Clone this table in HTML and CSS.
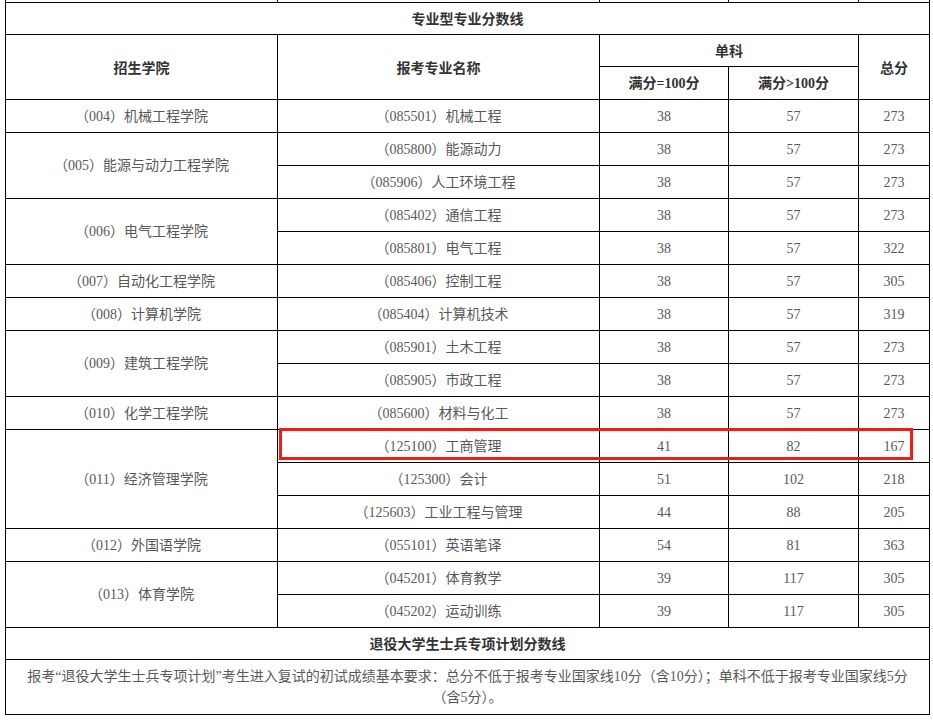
FILE: index.html
```html
<!DOCTYPE html>
<html lang="zh-CN">
<head>
<meta charset="utf-8">
<title>专业型专业分数线</title>
<link rel="stylesheet" href="styles.css">
</head>
<body>
<div class="wrap">
<table class="score">
  <colgroup>
    <col class="c1"><col class="c2"><col class="c3"><col class="c4"><col class="c5">
  </colgroup>
  <tbody>
    <tr class="cut"><td></td><td></td><td></td><td></td><td></td></tr>
    <tr class="title"><td colspan="5">专业型专业分数线</td></tr>
    <tr class="head"><td rowspan="2">招生学院</td><td rowspan="2">报考专业名称</td><td colspan="2">单科</td><td rowspan="2">总分</td></tr>
    <tr class="head sub"><td>满分=100分</td><td>满分&gt;100分</td></tr>
    <tr><td>（004）机械工程学院</td><td>（085501）机械工程</td><td>38</td><td>57</td><td>273</td></tr>
    <tr><td rowspan="2">（005）能源与动力工程学院</td><td>（085800）能源动力</td><td>38</td><td>57</td><td>273</td></tr>
    <tr><td>（085906）人工环境工程</td><td>38</td><td>57</td><td>273</td></tr>
    <tr><td rowspan="2">（006）电气工程学院</td><td>（085402）通信工程</td><td>38</td><td>57</td><td>273</td></tr>
    <tr><td>（085801）电气工程</td><td>38</td><td>57</td><td>322</td></tr>
    <tr><td>（007）自动化工程学院</td><td>（085406）控制工程</td><td>38</td><td>57</td><td>305</td></tr>
    <tr><td>（008）计算机学院</td><td>（085404）计算机技术</td><td>38</td><td>57</td><td>319</td></tr>
    <tr><td rowspan="2">（009）建筑工程学院</td><td>（085901）土木工程</td><td>38</td><td>57</td><td>273</td></tr>
    <tr><td>（085905）市政工程</td><td>38</td><td>57</td><td>273</td></tr>
    <tr><td>（010）化学工程学院</td><td>（085600）材料与化工</td><td>38</td><td>57</td><td>273</td></tr>
    <tr><td rowspan="3">（011）经济管理学院</td><td>（125100）工商管理</td><td>41</td><td>82</td><td>167</td></tr>
    <tr><td>（125300）会计</td><td>51</td><td>102</td><td>218</td></tr>
    <tr><td>（125603）工业工程与管理</td><td>44</td><td>88</td><td>205</td></tr>
    <tr><td>（012）外国语学院</td><td>（055101）英语笔译</td><td>54</td><td>81</td><td>363</td></tr>
    <tr><td rowspan="2">（013）体育学院</td><td>（045201）体育教学</td><td>39</td><td>117</td><td>305</td></tr>
    <tr><td>（045202）运动训练</td><td>39</td><td>117</td><td>305</td></tr>
    <tr class="title"><td colspan="5">退役大学生士兵专项计划分数线</td></tr>
    <tr class="note"><td colspan="5">报考“退役大学生士兵专项计划”考生进入复试的初试成绩基本要求：总分不低于报考专业国家线10分（含10分）；单科不低于报考专业国家线5分（含5分）。</td></tr>
  </tbody>
</table>
<div class="mark"></div>
</div>
</body>
</html>
```
FILE: styles.css
```css
html, body {
  margin: 0;
  padding: 0;
  background: #ffffff;
}
body {
  font-family: "Liberation Serif", "Noto Sans CJK SC", serif;
  font-size: 14px;
  color: #595959;
  overflow: hidden;
}
.wrap {
  position: relative;
  margin-left: 5px;
  width: 924px;
}
.score {
  border-collapse: collapse;
  table-layout: fixed;
  width: 924px;
}
.c1 { width: 272px; }
.c2 { width: 322px; }
.c3 { width: 129px; }
.c4 { width: 130px; }
.c5 { width: 71px; }
.score td {
  border: 1px solid #000;
  padding: 0 4px;
  height: 32px;
  line-height: 21px;
  text-align: center;
  vertical-align: middle;
}
.score tr.cut td {
  border-top: none;
  height: 2px;
  padding: 0;
  line-height: 2px;
}
.score tr.title td,
.score tr.head td {
  font-weight: bold;
  color: #333333;
  font-family: "Noto Sans CJK SC", "Liberation Sans", sans-serif;
  font-size: 14px;
}
.score tr.head td { height: 31px; }
.score tr.head.sub td { height: 32px; font-family: "Liberation Serif", "Noto Sans CJK SC", serif; }
.score tr.title td { height: 31px; }
.score tr.note td {
  height: 54px;
  padding: 0 15px;
}
.mark {
  position: absolute;
  left: 274px;
  top: 428px;
  width: 628px;
  height: 26px;
  border: 3px solid #f21c12;
}
```
